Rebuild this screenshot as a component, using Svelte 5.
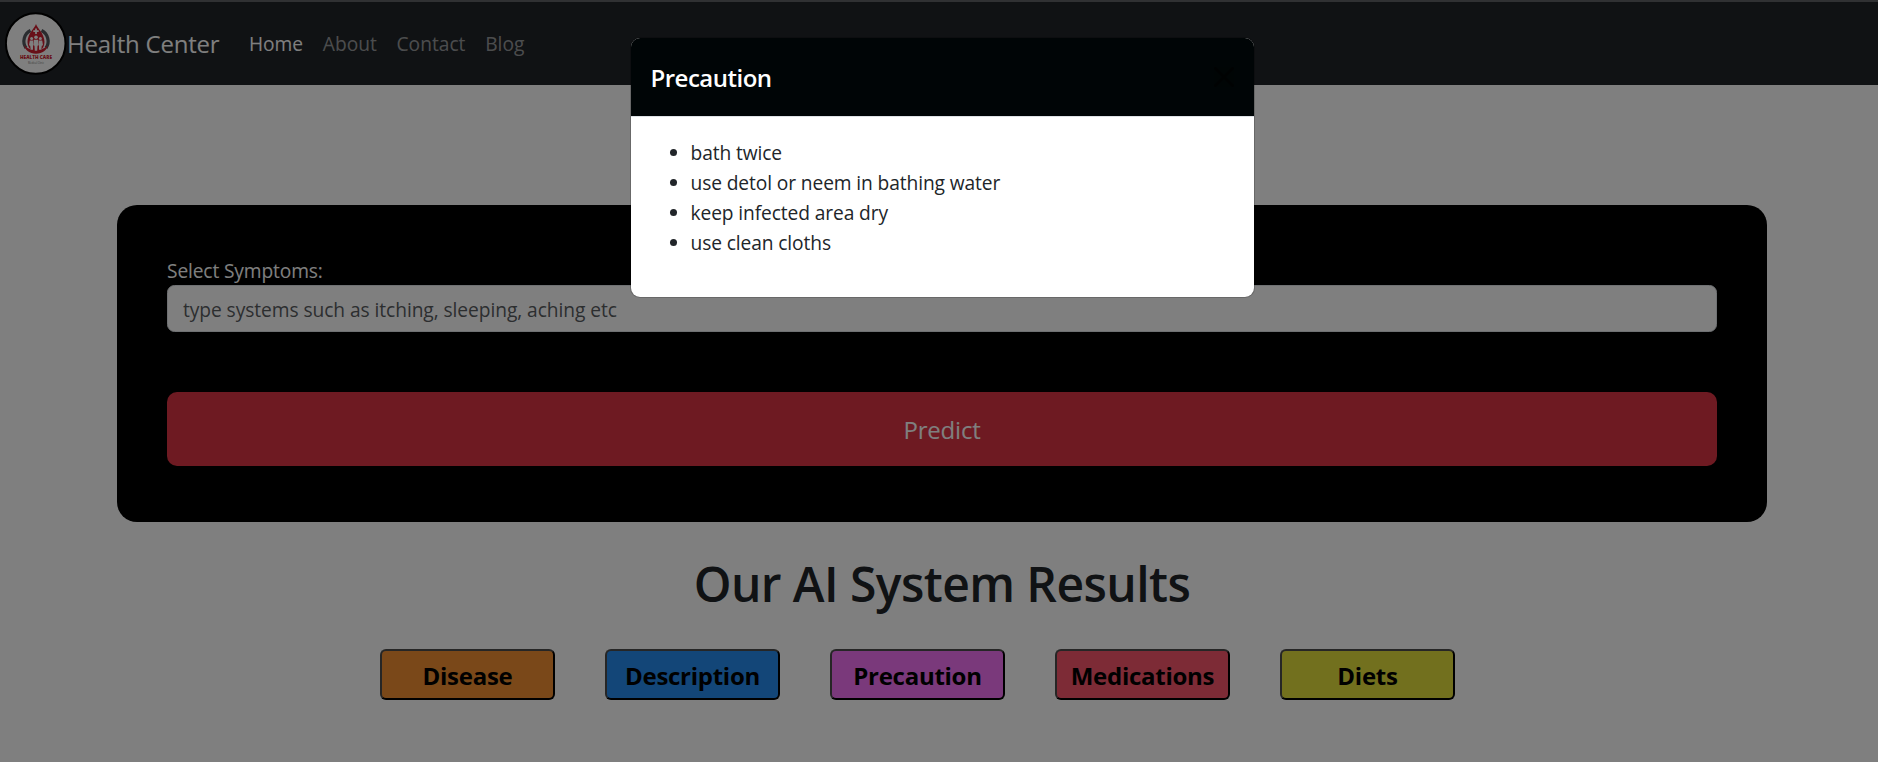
<script>
  const links = ['Home', 'About', 'Contact', 'Blog'];
  const precautions = ['bath twice', 'use detol or neem in bathing water', 'keep infected area dry', 'use clean cloths'];
  const results = [
    { label: 'Disease', tone: 'orange' },
    { label: 'Description', tone: 'blue' },
    { label: 'Precaution', tone: 'violet' },
    { label: 'Medications', tone: 'red' },
    { label: 'Diets', tone: 'olive' }
  ];
</script>

<div class="page">
  <nav class="navbar">
    <span class="logo">
      <svg viewBox="0 0 62 63" width="62" height="63">
        <ellipse cx="30.7" cy="31.5" rx="29.8" ry="30.3" fill="#fff" stroke="#000" stroke-width="2" />
        <path d="M25.500 18.500A12 12 0 0 0 21 36M36.500 18.500A12 12 0 0 1 41 36" fill="none" stroke="#55595e" stroke-width="3.200" />
        <path d="M31 12C30 16 22.500 21.500 22.500 30c0 4 2 7 4 8.500h9c2-1.500 4-4.500 4-8.500C39.500 21.500 32 16 31 12z" fill="#d01f30" />
        <path d="M19 33c2 2.500 5 3.500 8 5h8c3-1.500 6-2.500 8-5-1 5-5.500 8.700-12 8.700S20 38 19 33z" fill="#d01f30" />
        <path d="M31 16.500v5.400M28.300 19.200h5.400" stroke="#fff" stroke-width="1.8" />
        <g fill="#fff">
          <circle cx="31" cy="25.300" r="1.800" />
          <circle cx="26.600" cy="26.500" r="1.500" />
          <circle cx="35.400" cy="26.500" r="1.500" />
          <path d="M28.800 27.800h4.400l.6 5.500-1.300.5-.3 5h-2.400l-.3-5-1.300-.5z" />
          <path d="M24.800 28.600h3.200v9.200h-2.300l-.5-4-1.200-.5zM37.200 28.600H34v9.200h2.300l.5-4 1.200-.5z" />
        </g>
        <text x="15" y="47.300" textLength="32" lengthAdjust="spacingAndGlyphs" class="logo-name">HEALTH CARE</text>
        <text x="23" y="51.600" textLength="16" lengthAdjust="spacingAndGlyphs" class="logo-sub">Medical Clinic</text>
      </svg>
    </span>
    <span class="brand">Health Center</span>
    {#each links as link, i}
      <a class="link" class:active={i === 0} href="#top">{link}</a>
    {/each}
  </nav>

  <section class="card">
    <label for="symptoms">Select Symptoms:</label>
    <input id="symptoms" type="text" placeholder="type systems such as itching, sleeping, aching etc" />
    <button class="predict">Predict</button>
  </section>

  <h1>Our AI System Results</h1>
  <div class="results">
    {#each results as r}
      <button class="result {r.tone}">{r.label}</button>
    {/each}
  </div>
</div>

<div class="backdrop">
  <div class="modal" role="dialog" aria-labelledby="modal-title">
    <header>
      <h2 id="modal-title">Precaution</h2>
      <button class="close" aria-label="Close">
        <svg viewBox="0 0 20 20" width="20" height="20">
          <path d="M1.300 1.300l17.400 17.400M18.700 1.300L1.300 18.700" stroke="#000" stroke-width="2.500" stroke-linecap="round" opacity=".6" />
        </svg>
      </button>
    </header>
    <ul>
      {#each precautions as p}<li>{p}</li>{/each}
    </ul>
  </div>
</div>

<style>
  :global(body) {
    margin: 0;
    overflow: hidden;
    font-family: 'Open Sans', 'Noto Sans', sans-serif;
    font-size: 19.2px;
    line-height: 30px;
    color: #212529;
  }
  button, input { font-family: inherit; }

  .page { width: 1884px; height: 762px; background: #fff; overflow: hidden; }

  .navbar {
    display: flex;
    align-items: center;
    height: 83px;
    border-top: 2px solid #606266;
    background: #212529;
    padding-left: 5px;
  }
  .logo { display: flex; width: 62px; margin-right: 0; }
  .logo-name { font-size: 5.4px; font-weight: 800; fill: #d01f30; }
  .logo-sub { font-size: 2.8px; fill: #777; }
  .brand { margin-top: 1px; font-size: 24px; letter-spacing: -0.22px; color: #fff; margin-right: 29.5px; }
  .link { color: rgba(255, 255, 255, 0.55); text-decoration: none; margin-right: 19.700px; }
  .link.active { color: #fff; }

  .card {
    box-sizing: border-box;
    margin: 120px auto 0;
    width: 1650px;
    height: 317px;
    padding: 51px 50px 0;
    background: #000;
    border-radius: 20px;
  }
  label { display: block; margin-bottom: -1px; letter-spacing: -0.14px; color: #fff; }
  input {
    box-sizing: border-box;
    display: block;
    width: 100%;
    height: 47px;
    padding: 1px 15px 0;
    border: 1px solid #dee2e6;
    border-radius: 7.5px;
    background: #fff;
    font-size: 19.2px;
    letter-spacing: -0.07px;
  }
  input::placeholder { color: #595c5f; opacity: 1; }
  .predict {
    margin-top: 60px;
    width: 100%;
    height: 74px;
    padding: 0;
    border: 0;
    border-radius: 10px;
    background: #dc3545;
    color: #fff;
    font-size: 24px;
    letter-spacing: -0.2px;
  }

  h1 {
    margin: 32px 0 35px;
    font-size: 48px;
    font-weight: 600;
    line-height: 60px;
    letter-spacing: -0.57px;
    text-align: center;
  }

  .results { display: flex; gap: 50px; padding-left: 380px; }
  .result {
    width: 175px;
    height: 51px;
    padding: 2px 0 0;
    border: 2px solid;
    border-color: #4c4c4c #000 #000 #4c4c4c;
    border-radius: 6px;
    color: #000;
    font-size: 24px;
    font-weight: 700;
    letter-spacing: -0.27px;
  }
  .orange { background: #f49032; }
  .blue { background: #268cf0; }
  .violet { background: #f472f6; }
  .red { background: #fa566c; }
  .olive { background: #e4e03c; }

  .backdrop {
    position: absolute;
    inset: 0;
    width: 1884px;
    display: flex;
    justify-content: center;
    align-items: flex-start;
    background: rgba(0, 0, 0, 0.5);
  }
  .modal {
    box-sizing: border-box;
    margin-top: 37px;
    width: 625px;
    height: 261px;
    overflow: hidden;
    border: 1px solid rgba(0, 0, 0, 0.175);
    border-radius: 10px;
    background: #fff;
    background-clip: padding-box;
  }
  header {
    box-sizing: border-box;
    display: flex;
    align-items: center;
    justify-content: space-between;
    height: 79px;
    padding: 0 20px 0 20px;
    border-bottom: 1px solid #dee2e6;
    background: #000506;
  }
  h2 { margin: 1px 0 0; font-size: 24px; font-weight: 600; letter-spacing: -0.5px; color: #fff; }
  .close { display: flex; padding: 0; border: 0; background: none; }
  ul { margin: 21px 0 0; padding-left: 60px; letter-spacing: -0.11px; }
</style>
